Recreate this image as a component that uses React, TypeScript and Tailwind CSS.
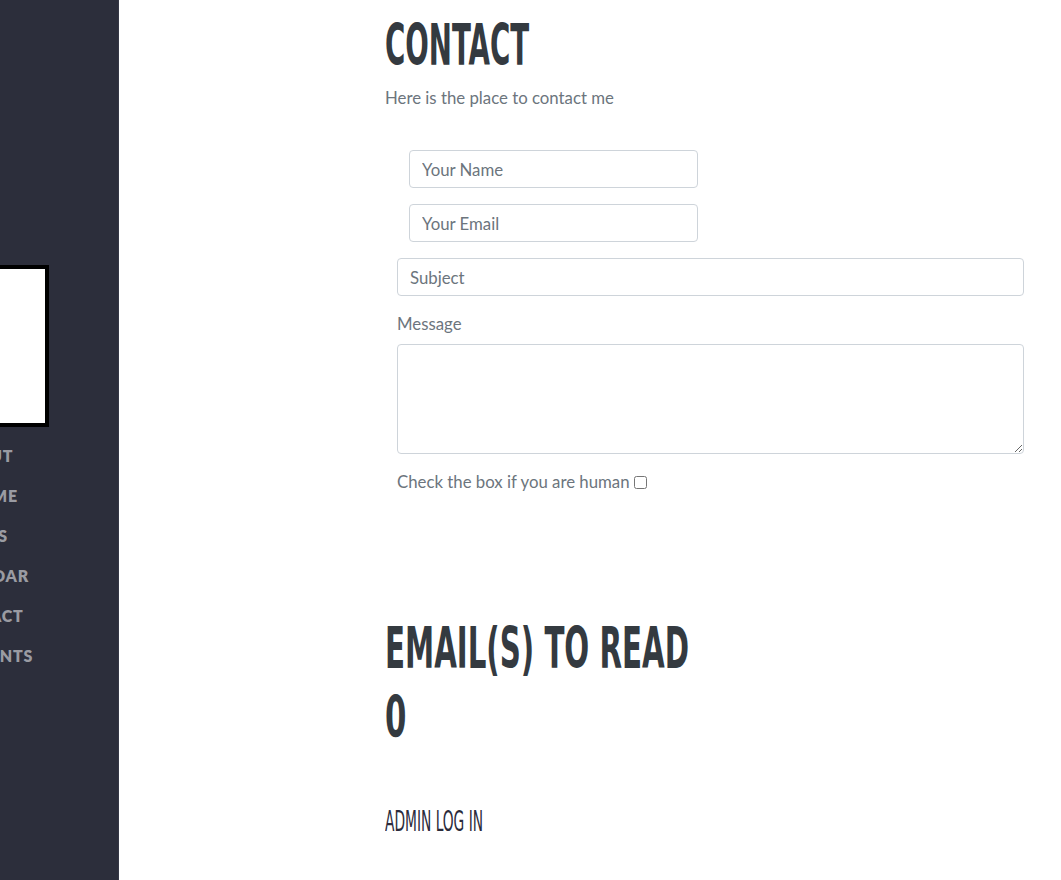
const navItems = ["About", "Resume", "Links", "Calendar", "Contact", "Comments"];

const condensed = "font-['Liberation_Sans_Narrow','DejaVu_Sans_Condensed',sans-serif]";

export default function App() {
  return (
    <div className="flex min-h-[880px] bg-white font-['Lato',sans-serif]">
      <nav className="w-[119px] shrink-0 overflow-hidden bg-[#2c2e3b] border-r border-[#363846]">
        <div className="ml-[-167px] w-[300px] pt-[265px] flex flex-col items-center">
          <div className="ml-[8px] w-[124px] h-[162px] bg-white border-4 border-black" />
          <ul className="mt-[9px] w-full">
            {navItems.map((item) => (
              <li
                key={item}
                className="py-2 text-center text-base leading-6 font-extrabold uppercase tracking-[0.05rem] text-[#9a9ba2]"
              >
                {item}
              </li>
            ))}
          </ul>
        </div>
      </nav>

      <main className="flex-1 pl-[266px] pr-[25px] pt-[17px] text-[16.8px]">
        <section>
          <h2
            className={`block w-fit whitespace-nowrap origin-left scale-x-[0.54] ${condensed} font-bold text-[57px] leading-none uppercase text-[#343a40]`}
          >
            Contact
          </h2>
          <p className="mt-[12px] leading-6 text-[#6c757d]">Here is the place to contact me</p>

          <form className="mt-[40px] px-3">
            <div className="ml-3 flex flex-col gap-4">
              <input
                type="text"
                placeholder="Your Name"
                className="h-[38px] w-[289px] rounded border border-[#ced4da] px-3 text-[#495057] placeholder:text-[#6c757d] outline-none"
              />
              <input
                type="email"
                placeholder="Your Email"
                className="h-[38px] w-[289px] rounded border border-[#ced4da] px-3 text-[#495057] placeholder:text-[#6c757d] outline-none"
              />
            </div>
            <input
              type="text"
              placeholder="Subject"
              className="mt-4 block h-[38px] w-full rounded border border-[#ced4da] px-3 text-[#495057] placeholder:text-[#6c757d] outline-none"
            />
            <label className="mt-4 block leading-6 text-[#6c757d]">Message</label>
            <textarea className="mt-2 block h-[110px] w-full rounded border border-[#ced4da] px-3 py-1.5 outline-none" />
            <div className="mt-4 flex items-center leading-6 text-[#6c757d]">
              <span>Check the box if you are human</span>
              <input type="checkbox" className="ml-1 h-[13px] w-[13px]" />
            </div>
          </form>
        </section>

        <section className="mt-[120px]">
          <h2
            className={`block w-fit whitespace-nowrap origin-left scale-x-[0.571] ${condensed} font-bold text-[57px] leading-[69px] uppercase text-[#343a40]`}
          >
            Email(s) to read
          </h2>
          <h2
            className={`block w-fit origin-left scale-x-[0.6] ${condensed} font-bold text-[57px] leading-[69px] text-[#343a40]`}
          >
            0
          </h2>
          <a
            className={`mt-[55px] block w-fit whitespace-nowrap origin-left scale-x-[0.528] ${condensed} text-[29px] leading-none uppercase text-[#2b2b3b]`}
          >
            Admin Log In
          </a>
        </section>
      </main>
    </div>
  );
}
